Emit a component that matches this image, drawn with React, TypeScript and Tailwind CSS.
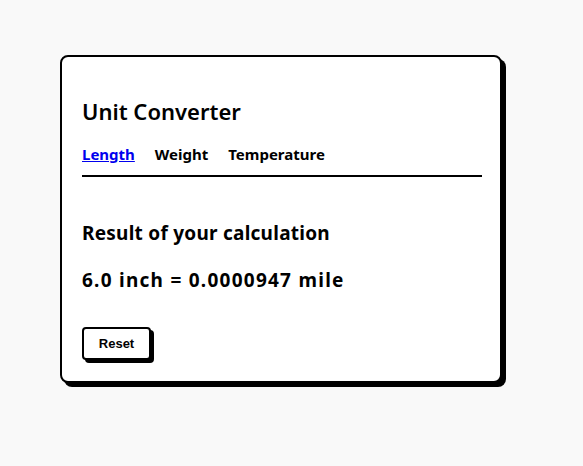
import React from "react";

export default function App() {
  const comic = { fontFamily: '"Comic Sans MS", "Noto Sans", sans-serif' };
  return (
    <div className="min-h-[466px] w-full bg-[#f9f9f9] pl-[60px] pt-[55px]" style={comic}>
      <div className="w-[442px] h-[328px] rounded-[8px] border-2 border-black bg-white shadow-[4px_4px_0_#000] px-[20px] pt-[39px]">
        <h1 className="text-[22px] leading-[30px] font-semibold text-black">Unit Converter</h1>
        <div className="mt-[18px] flex gap-[20px] text-[15px] font-bold leading-[20px]">
          <a href="#" className="text-[#0000ee] underline">Length</a>
          <span className="text-black">Weight</span>
          <span className="text-black">Temperature</span>
        </div>
        <div className="mt-[11px] h-[2px] w-[400px] bg-black" />
        <div className="mt-[43px] text-[19px] font-bold leading-[26px] tracking-[0.25px] text-black">Result of your calculation</div>
        <div className="mt-[21px] text-[19px] font-bold leading-[26px] tracking-[1.25px] text-black">6.0 inch = 0.0000947 mile</div>
        <button
          className="mt-[34px] h-[33px] w-[69px] rounded-[4px] border-2 border-black bg-white shadow-[3px_3px_0_#000] text-[13px] font-bold text-black"
          style={{ fontFamily: '"Liberation Sans", Arial, sans-serif' }}
        >
          Reset
        </button>
      </div>
    </div>
  );
}
